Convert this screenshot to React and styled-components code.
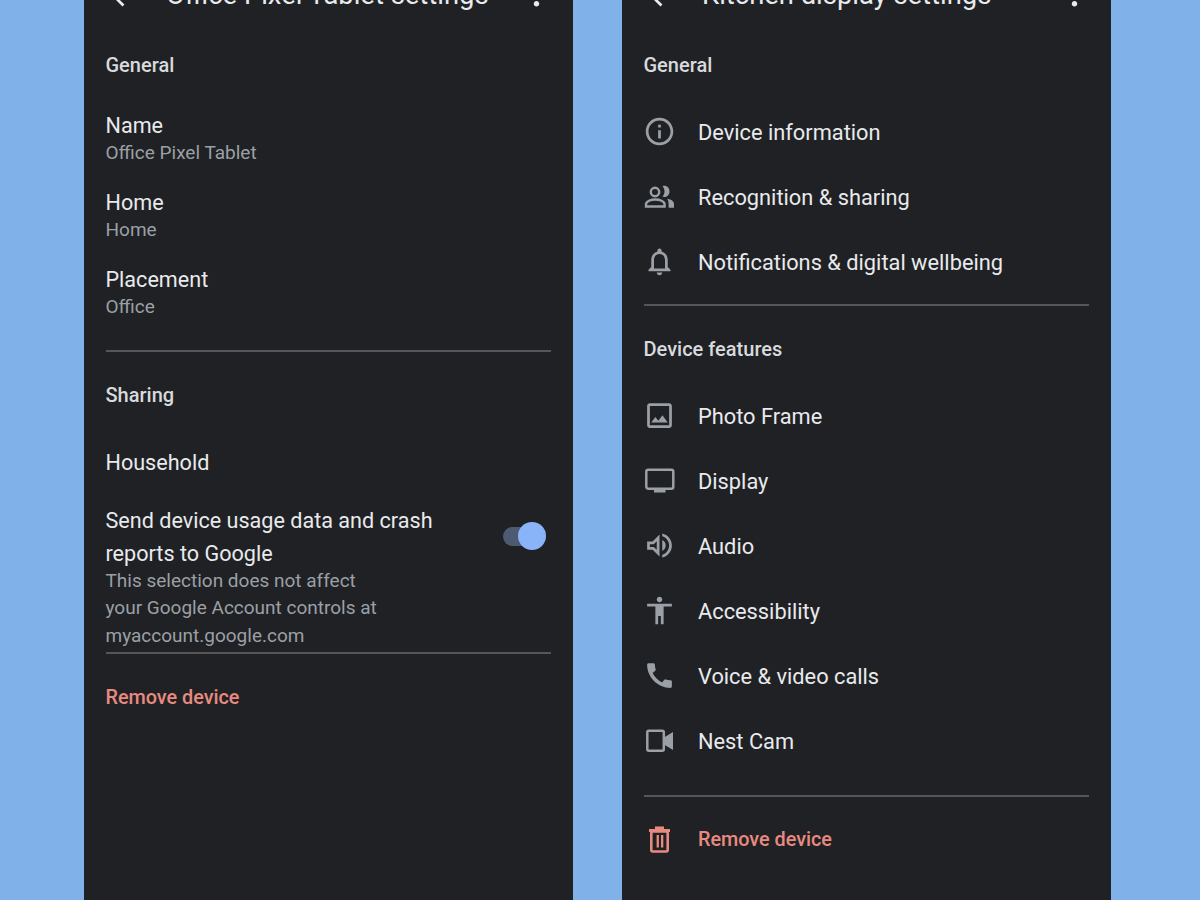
import React from 'react';
import styled, { createGlobalStyle } from 'styled-components';
import {
	MdArrowBack,
	MdMoreVert,
	MdInfoOutline,
	MdOutlineNotifications,
	MdOutlineImage,
	MdOutlineVolumeUp,
	MdAccessibility,
	MdCall,
} from 'react-icons/md';

const Global = createGlobalStyle`
	html, body {
		margin: 0;
		padding: 0;
		background: #80b1e9;
	}
`;

const Page = styled.div`
	width: 1200px;
	height: 900px;
	overflow: hidden;
	display: flex;
	gap: 49px;
	padding-left: 84px;
	box-sizing: border-box;
	background: #80b1e9;
	font-family: Roboto, "Liberation Sans", sans-serif;
`;

const Panel = styled.div`
	width: 489px;
	height: 900px;
	flex: none;
	padding: 0 22px;
	box-sizing: border-box;
	background: #202124;
	color: #e8eaed;
`;

const Header = styled.div`
	height: 44px;
	margin-top: -27px;
	display: flex;
	align-items: center;
	font-size: 27.4px;
	color: #e8eaed;
`;

const HeaderTitle = styled.div`
	flex: 1;
	margin-left: ${(p) => p.$indent}px;
	white-space: nowrap;
`;

const Section = styled.div`
	height: 44px;
	line-height: 45px;
	margin-top: ${(p) => p.$top}px;
	margin-left: -0.5px;
	font-size: 20px;
	font-weight: 500;
	color: #d8dadd;
`;

const Entry = styled.div`
	margin-top: ${(p) => p.$top}px;
	margin-left: -0.5px;
`;

const Title = styled.div`
	font-size: 21.6px;
	line-height: 33px;
`;

const Sub = styled.div`
	margin-top: -3px;
	font-size: 19px;
	line-height: 27.5px;
	color: #9aa0a6;
`;

const SwitchRow = styled.div`
	display: flex;
	justify-content: space-between;
	margin-top: 25px;
	margin-left: -0.5px;
`;

const SwitchText = styled.div`
	width: 350px;
`;

const Switch = styled.div`
	position: relative;
	width: 43px;
	height: 19px;
	margin: 23px 5px 0 0;
	border-radius: 10px;
	background: #4c5a72;
`;

const Knob = styled.div`
	position: absolute;
	top: -4.5px;
	right: 0;
	width: 28px;
	height: 28px;
	border-radius: 50%;
	background: #8ab4f8;
`;

const Divider = styled.div`
	height: 2px;
	margin-top: ${(p) => p.$top}px;
	background: #55565a;
`;

const Danger = styled.div`
	height: 44px;
	line-height: 46px;
	margin-top: 21px;
	margin-left: -0.5px;
	font-size: 19.8px;
	font-weight: 500;
	color: #e98a80;
`;

const Row = styled.div`
	height: 65px;
	display: flex;
	align-items: center;
	gap: 22px;
	font-size: ${(p) => (p.$danger ? 19.8 : 21.8)}px;
	color: ${(p) => (p.$danger ? '#e98a80' : '#e8eaed')};
	font-weight: ${(p) => (p.$danger ? 500 : 400)};
	margin-left: -1px;
`;

const RowIcon = styled.div`
	width: 33px;
	height: 33px;
	flex: none;
	font-size: 33px;
	line-height: 0;
	margin-top: -2px;
	color: ${(p) => (p.$danger ? '#e98a80' : '#9aa0a6')};
`;

const RowList = styled.div`
	margin-top: ${(p) => p.$top}px;
`;

const PeopleIcon = () => (
	<svg width="33" height="33" viewBox="0 0 33 33">
		<circle cx="12" cy="12" r="4.2" fill="none" stroke="currentColor" strokeWidth="2.4" />
		<path d="M3 26.5v-2.2c0-3 5-4.8 9.3-4.8s9.3 1.8 9.3 4.8v2.2z" fill="none" stroke="currentColor" strokeWidth="2.4" />
		<path d="M19.5 6.2c3.2-1.2 7 1 7 5.2s-3.8 6.4-7 5.2c1.2-1.4 2-3.2 2-5.2s-.8-3.8-2-5.2z" fill="currentColor" />
		<path d="M24.2 18.8c3.8.6 6.8 2.2 6.8 5.3v3.6h-5.4v-3.6c0-2.2-.5-3.9-1.4-5.3z" fill="currentColor" />
	</svg>
);

const TvIcon = () => (
	<svg width="33" height="33" viewBox="0 0 33 33">
		<rect x="3.3" y="5.8" width="27" height="19" rx="2" fill="none" stroke="currentColor" strokeWidth="2.5" />
		<rect x="11" y="25" width="11.5" height="3.5" fill="currentColor" />
	</svg>
);

const VideoIcon = () => (
	<svg width="33" height="33" viewBox="0 0 33 33">
		<rect x="4.3" y="6.8" width="16.5" height="20" rx="1.5" fill="none" stroke="currentColor" strokeWidth="2.5" />
		<path d="M21 13.5l9-5.5v18l-9-5.5z" fill="currentColor" />
	</svg>
);

const TrashIcon = () => (
	<svg width="33" height="33" viewBox="0 0 33 33">
		<path d="M12 7V4.5h9V7h6v3H6V7z" fill="currentColor" />
		<rect x="8.3" y="9.5" width="16.4" height="20" rx="1.5" fill="none" stroke="currentColor" strokeWidth="2.6" />
		<rect x="13.6" y="13" width="2.3" height="12.5" fill="currentColor" />
		<rect x="18" y="13" width="2.3" height="12.5" fill="currentColor" />
	</svg>
);

const general = [
	[MdInfoOutline, 'Device information'],
	[PeopleIcon, 'Recognition & sharing'],
	[MdOutlineNotifications, 'Notifications & digital wellbeing'],
];

const features = [
	[MdOutlineImage, 'Photo Frame'],
	[TvIcon, 'Display'],
	[MdOutlineVolumeUp, 'Audio'],
	[MdAccessibility, 'Accessibility'],
	[MdCall, 'Voice & video calls'],
	[VideoIcon, 'Nest Cam'],
];

function TopBar({ title, indent }) {
	return (
		<Header>
			<MdArrowBack size={33} />
			<HeaderTitle $indent={indent}>{title}</HeaderTitle>
			<MdMoreVert size={33} style={{ marginRight: -2 }} />
		</Header>
	);
}

function IconRows({ items, top }) {
	return (
		<RowList $top={top}>
			{items.map(([Icon, label]) => (
				<Row key={label}>
					<RowIcon><Icon /></RowIcon>
					{label}
				</Row>
			))}
		</RowList>
	);
}

export default function App() {
	return (
		<Page>
			<Global />
			<Panel>
				<TopBar title="Office Pixel Tablet settings" indent={27} />
				<Section $top={26}>General</Section>
				<Entry $top={21.5}>
					<Title>Name</Title>
					<Sub>Office Pixel Tablet</Sub>
				</Entry>
				<Entry $top={19.5}>
					<Title>Home</Title>
					<Sub>Home</Sub>
				</Entry>
				<Entry $top={19.5}>
					<Title>Placement</Title>
					<Sub>Office</Sub>
				</Entry>
				<Divider $top={30} />
				<Section $top={21}>Sharing</Section>
				<Entry $top={28.5}>
					<Title>Household</Title>
				</Entry>
				<SwitchRow>
					<SwitchText>
						<Title>Send device usage data and crash reports to Google</Title>
						<Sub>
							This selection does not affect<br />
							your Google Account controls at<br />
							myaccount.google.com
						</Sub>
					</SwitchText>
					<Switch><Knob /></Switch>
				</SwitchRow>
				<Divider $top={3} />
				<Danger>Remove device</Danger>
			</Panel>
			<Panel>
				<TopBar title="Kitchen display settings" indent={25} />
				<Section $top={26}>General</Section>
				<IconRows items={general} top={12.5} />
				<Divider $top={9.5} />
				<Section $top={20.5}>Device features</Section>
				<IconRows items={features} top={13.5} />
				<Divider $top={21} />
				<RowList $top={10}>
					<Row $danger>
						<RowIcon $danger><TrashIcon /></RowIcon>
						Remove device
					</Row>
				</RowList>
			</Panel>
		</Page>
	);
}
